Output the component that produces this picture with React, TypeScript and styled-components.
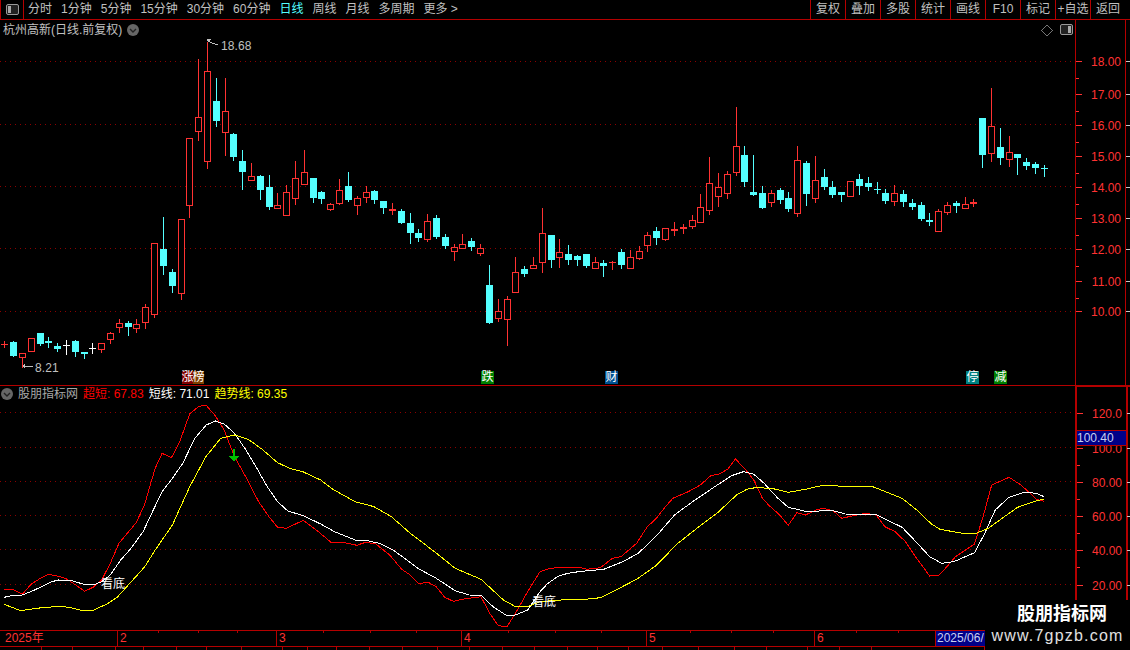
import styled, { createGlobalStyle } from 'styled-components';

const RED_LINE = '#b40000';
const FONT = '"Liberation Sans", "Noto Sans CJK SC", sans-serif';

// kind, high, top, bottom, low
type Candle = ['r' | 'c' | 'd' | 'w', number, number, number, number];

const candles: Candle[] = [
  ['d', 341, 344, 345, 347], ['c', 341, 342, 356, 356], ['r', 353, 353, 357, 367], ['r', 338, 338, 351, 351],
  ['c', 333, 333, 344, 345], ['c', 337, 341, 343, 347], ['c', 343, 346, 349, 351], ['w', 340, 345, 345, 354],
  ['c', 340, 341, 352, 356], ['c', 352, 352, 354, 358], ['w', 343, 348, 348, 353], ['r', 343, 343, 349, 352],
  ['r', 332, 333, 339, 343], ['r', 319, 323, 327, 332], ['c', 321, 323, 327, 335], ['r', 319, 324, 328, 332],
  ['r', 304, 307, 322, 328], ['r', 243, 243, 314, 317], ['c', 217, 249, 266, 274], ['c', 269, 272, 286, 292],
  ['r', 219, 219, 293, 299], ['r', 138, 138, 205, 217], ['r', 59, 117, 131, 140], ['r', 42, 71, 161, 168],
  ['c', 78, 101, 121, 126], ['r', 78, 111, 132, 155], ['c', 133, 134, 157, 160], ['c', 150, 161, 172, 189],
  ['r', 163, 176, 180, 180], ['c', 175, 176, 190, 199], ['c', 175, 187, 207, 209], ['r', 193, 205, 208, 208],
  ['r', 185, 192, 215, 215], ['r', 161, 178, 198, 204], ['r', 150, 172, 184, 184], ['c', 178, 178, 198, 202],
  ['c', 191, 192, 199, 203], ['r', 203, 204, 209, 210], ['r', 179, 190, 203, 204], ['c', 172, 186, 200, 201],
  ['r', 196, 198, 205, 214], ['r', 186, 192, 197, 202], ['c', 190, 191, 200, 203], ['c', 201, 201, 208, 213],
  ['d', 203, 209, 211, 214], ['c', 209, 211, 223, 223], ['c', 213, 223, 233, 243], ['c', 229, 233, 238, 241],
  ['r', 214, 221, 239, 241], ['c', 215, 218, 237, 238], ['c', 234, 237, 246, 248], ['r', 244, 247, 251, 260],
  ['r', 234, 244, 248, 248], ['c', 238, 241, 247, 250], ['r', 244, 248, 253, 255], ['c', 265, 285, 323, 323],
  ['r', 299, 311, 318, 321], ['r', 296, 299, 319, 345], ['r', 257, 272, 292, 292], ['c', 266, 269, 274, 276],
  ['r', 257, 265, 268, 268], ['r', 208, 233, 262, 272], ['c', 235, 235, 260, 267], ['r', 239, 252, 257, 267],
  ['c', 245, 254, 260, 264], ['c', 255, 256, 260, 265], ['c', 254, 254, 266, 267], ['r', 257, 262, 268, 268],
  ['c', 260, 263, 266, 276], ['d', 261, 262, 263, 269], ['c', 249, 252, 265, 268], ['r', 250, 257, 268, 268],
  ['r', 246, 251, 258, 259], ['r', 232, 235, 245, 251], ['c', 227, 231, 238, 244], ['r', 228, 228, 239, 240],
  ['d', 222, 229, 231, 235], ['d', 224, 227, 229, 233], ['r', 215, 220, 226, 228], ['r', 194, 207, 222, 222],
  ['r', 157, 183, 210, 214], ['r', 173, 187, 196, 206], ['r', 171, 174, 193, 198], ['r', 107, 146, 172, 175],
  ['c', 146, 155, 182, 186], ['c', 155, 192, 195, 195], ['c', 186, 193, 208, 208], ['r', 190, 193, 202, 206],
  ['c', 188, 190, 200, 203], ['c', 192, 198, 209, 211], ['r', 146, 160, 213, 216], ['c', 161, 163, 194, 205],
  ['r', 156, 180, 198, 202], ['c', 169, 177, 187, 189], ['c', 181, 187, 195, 197], ['c', 192, 192, 195, 201],
  ['r', 181, 181, 196, 196], ['c', 174, 179, 186, 194], ['c', 177, 183, 187, 190], ['c', 182, 189, 190, 193],
  ['c', 189, 193, 201, 203], ['r', 185, 193, 201, 205], ['c', 190, 194, 202, 206], ['c', 199, 203, 207, 209],
  ['c', 202, 205, 219, 220], ['c', 213, 220, 222, 225], ['r', 209, 211, 231, 231], ['r', 202, 205, 212, 214],
  ['c', 201, 203, 206, 212], ['r', 197, 204, 208, 208], ['d', 199, 202, 204, 206], ['c', 118, 118, 155, 167],
  ['r', 88, 126, 153, 161], ['c', 128, 147, 158, 164], ['r', 136, 152, 159, 166], ['c', 154, 154, 158, 174],
  ['c', 158, 162, 166, 169], ['c', 162, 164, 168, 173], ['c', 165, 168, 169, 176],
];

const candleX = (i: number) => Math.round(4.33 + 8.81 * i);

// traced off the chart at 2.9x / 3x, first half starts at y 400, second half at x 540 y 440
type Pt = [number, number];
const left = (pts: Pt[]) => pts.map(([x, y]) => `${(x / 2.9).toFixed(1)},${(400 + y / 3).toFixed(1)}`).join(' ');
const right = (pts: Pt[]) => pts.map(([x, y]) => `${(540 + x / 2.9).toFixed(1)},${(440 + y / 3).toFixed(1)}`).join(' ');

const redLine =
  left([[12, 568], [40, 570], [65, 583], [90, 553], [115, 536], [140, 523], [165, 528], [190, 535], [220, 555], [245, 574], [270, 562], [295, 540], [320, 490], [345, 430], [365, 405], [395, 368], [420, 312], [440, 240], [450, 205], [470, 160], [497, 173], [520, 128], [550, 42], [575, 20], [597, 15], [625, 48], [650, 90], [680, 170], [715, 235], [750, 305], [780, 350], [805, 382], [830, 385], [880, 361], [920, 392], [960, 427], [1000, 428], [1035, 436], [1060, 427], [1090, 432], [1130, 465], [1165, 508], [1190, 525], [1215, 552], [1240, 546], [1265, 560], [1290, 592], [1315, 604], [1340, 598], [1395, 590], [1420, 640], [1445, 677], [1470, 680], [1495, 640], [1530, 575]]) +
  ' ' +
  right([[0, 395], [20, 388], [50, 382], [115, 382], [135, 388], [175, 383], [210, 355], [235, 350], [280, 310], [310, 262], [340, 232], [360, 205], [385, 175], [430, 155], [465, 135], [495, 107], [520, 102], [545, 87], [567, 57], [595, 88], [620, 120], [645, 175], [665, 197], [695, 225], [720, 256], [745, 218], [770, 225], [800, 210], [820, 205], [850, 212], [875, 235], [905, 228], [945, 220], [975, 225], [1000, 260], [1030, 275], [1060, 305], [1090, 352], [1130, 408], [1157, 406], [1180, 380], [1205, 350], [1260, 312], [1285, 230], [1310, 135], [1360, 112], [1395, 135], [1440, 178], [1462, 184]]);

const whiteLine =
  left([[12, 592], [40, 586], [65, 585], [100, 570], [150, 545], [170, 540], [205, 541], [240, 552], [270, 555], [295, 545], [320, 525], [350, 480], [380, 445], [415, 395], [440, 340], [470, 275], [500, 235], [530, 190], [565, 115], [598, 75], [625, 63], [650, 72], [680, 100], [710, 145], [745, 205], [775, 260], [805, 305], [835, 333], [880, 347], [930, 372], [970, 395], [1030, 420], [1065, 422], [1100, 430], [1140, 450], [1180, 480], [1215, 507], [1265, 535], [1320, 572], [1360, 585], [1395, 586], [1430, 620], [1470, 647], [1495, 645], [1530, 630]]) +
  ' ' +
  right([[0, 455], [20, 433], [50, 410], [80, 400], [120, 394], [185, 388], [240, 365], [285, 340], [340, 285], [390, 225], [440, 187], [500, 145], [555, 107], [590, 95], [620, 103], [650, 130], [690, 175], [720, 202], [770, 214], [850, 212], [885, 222], [975, 224], [1050, 262], [1090, 305], [1130, 350], [1165, 370], [1200, 365], [1260, 338], [1290, 280], [1320, 210], [1360, 172], [1405, 157], [1440, 160], [1462, 170]]);

const yellowLine =
  left([[12, 613], [60, 632], [105, 625], [170, 619], [200, 622], [240, 632], [270, 631], [310, 612], [340, 592], [420, 500], [450, 450], [500, 375], [550, 260], [597, 170], [640, 115], [680, 105], [720, 118], [760, 148], [805, 188], [840, 205], [880, 216], [930, 240], [965, 268], [1030, 305], [1085, 320], [1135, 350], [1190, 400], [1260, 455], [1320, 505], [1395, 538], [1460, 600], [1495, 620], [1530, 620]]) +
  ' ' +
  right([[0, 485], [60, 480], [140, 477], [175, 473], [220, 450], [280, 418], [335, 378], [400, 310], [455, 265], [515, 218], [570, 165], [600, 148], [630, 142], [680, 147], [720, 157], [770, 148], [820, 136], [860, 136], [865, 139], [965, 140], [1050, 175], [1095, 212], [1135, 252], [1160, 268], [1225, 280], [1265, 280], [1300, 265], [1340, 235], [1385, 202], [1440, 182], [1462, 177]]);

const tabs = ['分时', '1分钟', '5分钟', '15分钟', '30分钟', '60分钟', '日线', '周线', '月线', '多周期', '更多 >'];
const actions = ['复权', '叠加', '多股', '统计', '画线', 'F10', '标记', '+自选', '返回'];

const priceTicks: [string, number][] = [
  ['18.00', 61], ['17.00', 94], ['16.00', 125], ['15.00', 156], ['14.00', 187],
  ['13.00', 218], ['12.00', 249], ['11.00', 281], ['10.00', 311],
];
const priceGrid = [61, 124, 186, 248, 311];

const indicatorTicks: [string, number][] = [
  ['120.0', 412], ['100.0', 447], ['80.00', 481], ['60.00', 515], ['40.00', 549], ['20.00', 584],
];
const indicatorGrid = [412, 447, 481, 515, 549, 584];

const flags = [
  { left: 182, size: 11, labels: [['涨', '#800000'], ['榜', '#804000']] },
  { left: 481, size: 13, labels: [['跌', '#008000']] },
  { left: 605, size: 13, labels: [['财', '#004f90']] },
  { left: 966, size: 13, labels: [['停', '#008080']] },
  { left: 994, size: 13, labels: [['减', '#008000']] },
];

const months = [
  { label: '2025年', width: 118, ticks: [] as number[] },
  { label: '2', width: 159, ticks: [40, 80, 119] },
  { label: '3', width: 185, ticks: [46, 93, 139] },
  { label: '4', width: 185, ticks: [46, 93, 139] },
  { label: '5', width: 168, ticks: [43, 84, 126] },
  { label: '6', width: 121, ticks: [41, 83] },
];

const bottomTabs = [42, 31, 43, 28, 33, 30, 35, 41, 25, 29, 33, 33, 35, 32, 33, 32, 33, 30, 31, 34, 36, 36, 32, 41, 32, 32, 113];

function PanelIcon({ filled }: { filled: 'left' | 'right' }) {
  return (
    <svg width="13" height="11" viewBox="0 0 13 11">
      <rect x="0.5" y="0.5" width="12" height="10" rx="1.5" fill="#222" stroke="#999" />
      <rect x={filled === 'left' ? 2 : 8} y="2" width="3" height="7" fill="#aaa" />
    </svg>
  );
}

function RoundChevron() {
  return (
    <svg width="12" height="12" viewBox="0 0 12 12">
      <circle cx="6" cy="6" r="6" fill="#666" />
      <polyline points="3,5 6,8 9,5" fill="none" stroke="#222" strokeWidth="1.4" />
    </svg>
  );
}

function CandleMark({ candle, index }: { candle: Candle; index: number }) {
  const [kind, high, top, bottom, low] = candle;
  const x = candleX(index);
  const color = kind === 'c' ? '#54ffff' : kind === 'w' ? '#ffffff' : '#ff3232';
  return (
    <g>
      <line x1={x + 0.5} x2={x + 0.5} y1={high} y2={low + 1} stroke={color} />
      {kind === 'r' ? (
        <rect x={x - 2.5} y={top + 0.5} width={6} height={bottom - top} fill="#000" stroke={color} />
      ) : (
        <rect x={x - 3} y={top} width={7} height={Math.max(bottom - top, 1)} fill={color} />
      )}
    </g>
  );
}

function PriceChart() {
  return (
    <ChartSvg width="1075" height="365" viewBox="0 20 1075 365">
      {priceGrid.map((y) => (
        <GridLine key={y} x1="0" x2="1075" y1={y + 0.5} y2={y + 0.5} />
      ))}
      {candles.map((c, i) => (
        <CandleMark key={i} candle={c} index={i} />
      ))}
      <polyline points="207,41 207,39 211,39 208,41 212,43 218,45" fill="none" stroke="#c0c0c0" />
      <PriceNote x="221" y="50">18.68</PriceNote>
      <polygon points="22,366 25,364 25,368" fill="#c0c0c0" />
      <line x1="25" x2="33" y1="366.5" y2="366.5" stroke="#c0c0c0" />
      <PriceNote x="35" y="372">8.21</PriceNote>
      <polygon points="1047,25 1052.5,30.5 1047,36 1041.5,30.5" fill="none" stroke="#777" />
    </ChartSvg>
  );
}

function IndicatorChart() {
  return (
    <ChartSvg width="1075" height="244" viewBox="0 386 1075 244">
      {indicatorGrid.map((y) => (
        <GridLine key={y} x1="0" x2="1075" y1={y + 0.5} y2={y + 0.5} />
      ))}
      <Curve points={redLine} stroke="#ff0000" />
      <Curve points={whiteLine} stroke="#ffffff" />
      <Curve points={yellowLine} stroke="#ffff00" />
      <polygon points="233,449 235,449 235,456 239.5,456 234,462 228.5,456 233,456" fill="#00c000" />
      <SignalText x="101" y="588">看底</SignalText>
      <SignalText x="532" y="606">看底</SignalText>
    </ChartSvg>
  );
}

function AxisScale({ ticks, top, height }: { ticks: [string, number][]; top: number; height: number }) {
  return (
    <ChartSvg width="54" height={height} viewBox={`1076 ${top} 54 ${height}`}>
      <line x1="1125.5" x2="1125.5" y1={top} y2={top + height} stroke={RED_LINE} strokeWidth={top > 100 ? 2 : 1} />
      {ticks.map(([label, y], i) => (
        <g key={label}>
          <line x1="1076" x2="1082" y1={y + 0.5} y2={y + 0.5} stroke="#ff3232" />
          <line x1="1126" x2="1130" y1={y + 0.5} y2={y + 0.5} stroke="#c8c8c8" />
          {i < ticks.length - 1 && (
            <line x1="1076" x2="1079" y1={y + 17.5} y2={y + 17.5} stroke="#ff3232" />
          )}
          <AxisText x="1121" y={y + 5}>{label}</AxisText>
        </g>
      ))}
    </ChartSvg>
  );
}

function App() {
  return (
    <Page>
      <GlobalStyle />
      <Toolbar>
        <ToggleCell>
          <PanelIcon filled="left" />
        </ToggleCell>
        <TabRow>
          {tabs.map((t) => (
            <Tab key={t} $active={t === '日线'}>{t}</Tab>
          ))}
        </TabRow>
        <ActionRow>
          {actions.map((a) => (
            <ActionButton key={a}>{a}</ActionButton>
          ))}
        </ActionRow>
      </Toolbar>

      <PricePane>
        <ChartArea>
          <PriceChart />
          <PaneTitle>
            <span>杭州高新(日线.前复权)</span>
            <RoundChevron />
          </PaneTitle>
          <CornerIcon>
            <PanelIcon filled="right" />
          </CornerIcon>
          {flags.map((f) => (
            <FlagGroup key={f.left} style={{ left: f.left }}>
              {f.labels.map(([text, color]) => (
                <FlagTile key={text} $bg={color} $size={f.size}>{text}</FlagTile>
              ))}
            </FlagGroup>
          ))}
        </ChartArea>
        <Axis>
          <AxisScale ticks={priceTicks} top={20} height={365} />
        </Axis>
      </PricePane>

      <IndicatorPane>
        <ChartArea>
          <IndicatorChart />
          <Legend>
            <RoundChevron />
            <LegendItem $color="#a8a8a8">股朋指标网</LegendItem>
            <LegendItem $color="#ff0000">超短: 67.83</LegendItem>
            <LegendItem $color="#ffffff">短线: 71.01</LegendItem>
            <LegendItem $color="#ffff00">趋势线: 69.35</LegendItem>
          </Legend>
        </ChartArea>
        <Axis $thick>
          <AxisScale ticks={indicatorTicks} top={386} height={244} />
          <CursorPrice>100.40</CursorPrice>
        </Axis>
      </IndicatorPane>

      <TimeAxis>
        {months.map((m) => (
          <MonthCell key={m.label} $width={m.width}>
            {m.label}
            {m.ticks.map((t) => (
              <MonthTick key={t} style={{ left: t }} />
            ))}
          </MonthCell>
        ))}
        <CursorDate>2025/06/</CursorDate>
      </TimeAxis>

      <BottomTabs>
        {bottomTabs.map((w, i) => (
          <BottomTab key={i} $width={w} />
        ))}
      </BottomTabs>

      <Watermark>
        <WatermarkName>股朋指标网</WatermarkName>
        <WatermarkUrl>www.7gpzb.com</WatermarkUrl>
      </Watermark>
    </Page>
  );
}

const GlobalStyle = createGlobalStyle`
  html, body {
    margin: 0;
    padding: 0;
    background: #000;
  }
`;

const Page = styled.div`
  position: relative;
  width: 1130px;
  height: 650px;
  display: flex;
  flex-direction: column;
  overflow: hidden;
  background: #000;
  color: #c0c0c0;
  font-family: ${FONT};
  font-size: 12px;
`;

const Toolbar = styled.div`
  display: flex;
  align-items: stretch;
  height: 20px;
  box-sizing: border-box;
  border-bottom: 1px solid ${RED_LINE};
`;

const ToggleCell = styled.div`
  width: 24px;
  box-sizing: border-box;
  display: flex;
  align-items: center;
  justify-content: center;
  border-left: 1px solid ${RED_LINE};
  border-right: 1px solid ${RED_LINE};
`;

const TabRow = styled.div`
  display: flex;
  align-items: center;
  gap: 9px;
  flex: 1;
  padding-left: 4px;
`;

const Tab = styled.div<{ $active?: boolean }>`
  white-space: nowrap;
  line-height: 19px;
  color: ${(p) => (p.$active ? '#54ffff' : '#c0c0c0')};
`;

const ActionRow = styled.div`
  display: flex;
  margin-right: 5px;
`;

const ActionButton = styled.div`
  width: 35px;
  box-sizing: border-box;
  border-left: 1px solid ${RED_LINE};
  text-align: center;
  line-height: 19px;
  white-space: nowrap;
`;

const PricePane = styled.div`
  display: flex;
  height: 366px;
  box-sizing: border-box;
  border-bottom: 1px solid ${RED_LINE};
`;

const IndicatorPane = styled.div`
  display: flex;
  height: 244px;
`;

const ChartArea = styled.div`
  position: relative;
  width: 1075px;
  flex: none;
`;

const ChartSvg = styled.svg`
  display: block;
  shape-rendering: crispEdges;
`;

const GridLine = styled.line`
  stroke: #8c0000;
  stroke-dasharray: 1 4;
`;

const Curve = styled.polyline`
  fill: none;
  stroke-width: 1;
`;

const PriceNote = styled.text`
  fill: #c0c0c0;
  font-size: 12px;
  letter-spacing: 0.1px;
`;

const SignalText = styled.text`
  fill: #ffffff;
  font-size: 12px;
`;

const AxisText = styled.text`
  fill: #ff3232;
  font-size: 12px;
  text-anchor: end;
`;

const PaneTitle = styled.div`
  position: absolute;
  left: 3px;
  top: 3px;
  display: flex;
  align-items: center;
  gap: 5px;
  line-height: 14px;
  white-space: nowrap;
`;

const CornerIcon = styled.div`
  position: absolute;
  left: 1060px;
  top: 4px;
  line-height: 0;
`;

const FlagGroup = styled.div`
  position: absolute;
  top: 351px;
  display: flex;
`;

const FlagTile = styled.div<{ $bg: string; $size: number }>`
  width: ${(p) => p.$size}px;
  height: 13px;
  background: ${(p) => p.$bg};
  color: #fff;
  font-size: 12px;
  line-height: 13px;
  display: flex;
  justify-content: center;
  white-space: nowrap;
`;

const Legend = styled.div`
  position: absolute;
  left: 1px;
  top: 1px;
  display: flex;
  align-items: center;
  gap: 5px;
  line-height: 14px;
  white-space: nowrap;
`;

const LegendItem = styled.span<{ $color: string }>`
  color: ${(p) => p.$color};
`;

const Axis = styled.div<{ $thick?: boolean }>`
  position: relative;
  flex: 1;
  box-sizing: border-box;
  border-left: ${(p) => (p.$thick ? 2 : 1)}px solid ${RED_LINE};
  border-top: ${(p) => (p.$thick ? 1 : 0)}px solid ${RED_LINE};
`;

const CursorPrice = styled.div`
  position: absolute;
  left: 0;
  top: 43px;
  width: 49px;
  height: 16px;
  box-sizing: border-box;
  background: #000088;
  border-top: 1px solid ${RED_LINE};
  border-bottom: 1px solid ${RED_LINE};
  color: #c8d0f0;
  line-height: 14px;
`;

const TimeAxis = styled.div`
  display: flex;
  width: 985px;
  height: 17px;
  box-sizing: border-box;
  border-top: 1px solid ${RED_LINE};
  border-bottom: 1px solid ${RED_LINE};
`;

const MonthCell = styled.div<{ $width: number }>`
  position: relative;
  width: ${(p) => p.$width}px;
  box-sizing: border-box;
  border-right: 1px solid ${RED_LINE};
  padding-left: 2px;
  color: #ff3232;
  line-height: 15px;
  white-space: nowrap;

  &:first-child {
    padding-left: 5px;
  }
`;

const MonthTick = styled.div`
  position: absolute;
  top: 0;
  width: 1px;
  height: 2px;
  background: ${RED_LINE};
`;

const CursorDate = styled.div`
  flex: 1;
  overflow: hidden;
  background: #000088;
  color: #c8d0f0;
  line-height: 15px;
  padding-left: 1px;
  white-space: nowrap;
`;

const BottomTabs = styled.div`
  display: flex;
  width: 985px;
  height: 3px;
`;

const BottomTab = styled.div<{ $width: number }>`
  width: ${(p) => p.$width}px;
  box-sizing: border-box;
  border-right: 1px solid ${RED_LINE};
`;

const Watermark = styled.div`
  position: absolute;
  right: 0;
  bottom: 0;
  width: 145px;
  height: 50px;
  box-sizing: border-box;
  padding-top: 2px;
  display: flex;
  flex-direction: column;
  align-items: center;
  background: #000;
`;

const WatermarkName = styled.div`
  margin-left: 9px;
  color: #fff;
  font-size: 18px;
  font-weight: 700;
  line-height: 24px;
`;

const WatermarkUrl = styled.div`
  color: #e0e0e0;
  font-size: 16px;
  letter-spacing: 1.2px;
  line-height: 20px;
`;

export default App;
